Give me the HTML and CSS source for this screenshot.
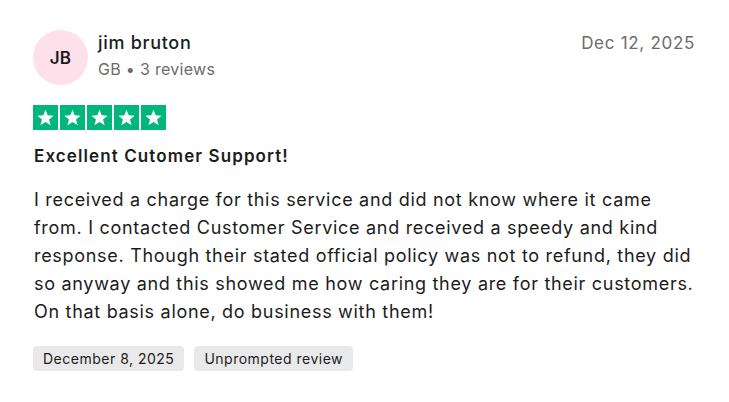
FILE: index.html
```html
<!DOCTYPE html>
<html>
<head>
<meta charset="utf-8">
<link rel="stylesheet" href="styles.css">
</head>
<body>
<article class="review">
  <header class="head">
    <div class="avatar">JB</div>
    <div class="who">
      <div class="name">jim bruton</div>
      <div class="meta">GB • 3 reviews</div>
    </div>
    <time class="date">Dec 12, 2025</time>
  </header>
  <div class="stars">
    <span class="star"><svg viewBox="0 0 24 24"><path d="M12 3.2l2.5 6.3 6.8.4-5.3 4.3 1.9 6.6L12 17l-5.9 3.8 1.9-6.6-5.3-4.3 6.8-.4z" fill="#fff"/></svg></span>
    <span class="star"><svg viewBox="0 0 24 24"><path d="M12 3.2l2.5 6.3 6.8.4-5.3 4.3 1.9 6.6L12 17l-5.9 3.8 1.9-6.6-5.3-4.3 6.8-.4z" fill="#fff"/></svg></span>
    <span class="star"><svg viewBox="0 0 24 24"><path d="M12 3.2l2.5 6.3 6.8.4-5.3 4.3 1.9 6.6L12 17l-5.9 3.8 1.9-6.6-5.3-4.3 6.8-.4z" fill="#fff"/></svg></span>
    <span class="star"><svg viewBox="0 0 24 24"><path d="M12 3.2l2.5 6.3 6.8.4-5.3 4.3 1.9 6.6L12 17l-5.9 3.8 1.9-6.6-5.3-4.3 6.8-.4z" fill="#fff"/></svg></span>
    <span class="star"><svg viewBox="0 0 24 24"><path d="M12 3.2l2.5 6.3 6.8.4-5.3 4.3 1.9 6.6L12 17l-5.9 3.8 1.9-6.6-5.3-4.3 6.8-.4z" fill="#fff"/></svg></span>
  </div>
  <h2 class="title">Excellent Cutomer Support!</h2>
  <p class="body">I received a charge for this service and did not know where it came from. I contacted Customer Service and received a speedy and kind response. Though their stated official policy was not to refund, they did so anyway and this showed me how caring they are for their customers. On that basis alone, do business with them!</p>
  <div class="tags">
    <span class="tag">December 8, 2025</span>
    <span class="tag">Unprompted review</span>
  </div>
</article>
</body>
</html>
```
FILE: styles.css
```css
html, body { margin: 0; padding: 0; background: #fff; }
body {
  font-family: Inter, "Open Sans", sans-serif;
  color: #1c1c1c;
}
.review {
  padding: 30px 34px 0 33px;
  width: 662px;
}
.head {
  display: flex;
  align-items: flex-start;
}
.avatar {
  width: 55px; height: 55px;
  border-radius: 50%;
  background: #fde0ea;
  display: flex; align-items: center; justify-content: center;
  font-size: 17px; font-weight: 600; letter-spacing: 0.3px;
  color: #1c1c1c;
  flex: none;
}
.who { margin-left: 10px; flex: 1; padding-top: 2px; }
.name { font-size: 18px; font-weight: 500; line-height: 22px; letter-spacing: 0.7px; }
.meta { font-size: 16px; color: #6c6c6c; line-height: 22px; margin-top: 4px; letter-spacing: 0.3px; }
.date { font-size: 17px; color: #6c6c6c; line-height: 22px; padding-top: 2px; letter-spacing: 0.7px; }
.stars {
  display: flex; gap: 2px;
  margin-top: 20px;
}
.star {
  width: 25px; height: 25px;
  background: #00b67a;
  display: flex; align-items: center; justify-content: center;
}
.star svg { width: 21px; height: 21px; display: block; }
.title {
  margin: 14px 0 0 1px;
  font-size: 17px; font-weight: 600; line-height: 24px; letter-spacing: 1.1px;
}
.body {
  margin: 18px 0 0 1px;
  width: 666px;
  font-size: 18px; line-height: 28px; letter-spacing: 0.7px;
}
.tags { display: flex; gap: 10px; margin-top: 20px; }
.tag {
  background: #e9e9e9;
  border-radius: 4px;
  font-size: 14px; line-height: 25px; letter-spacing: 0.5px;
  padding: 0 10px;
  color: #1c1c1c;
}
```
